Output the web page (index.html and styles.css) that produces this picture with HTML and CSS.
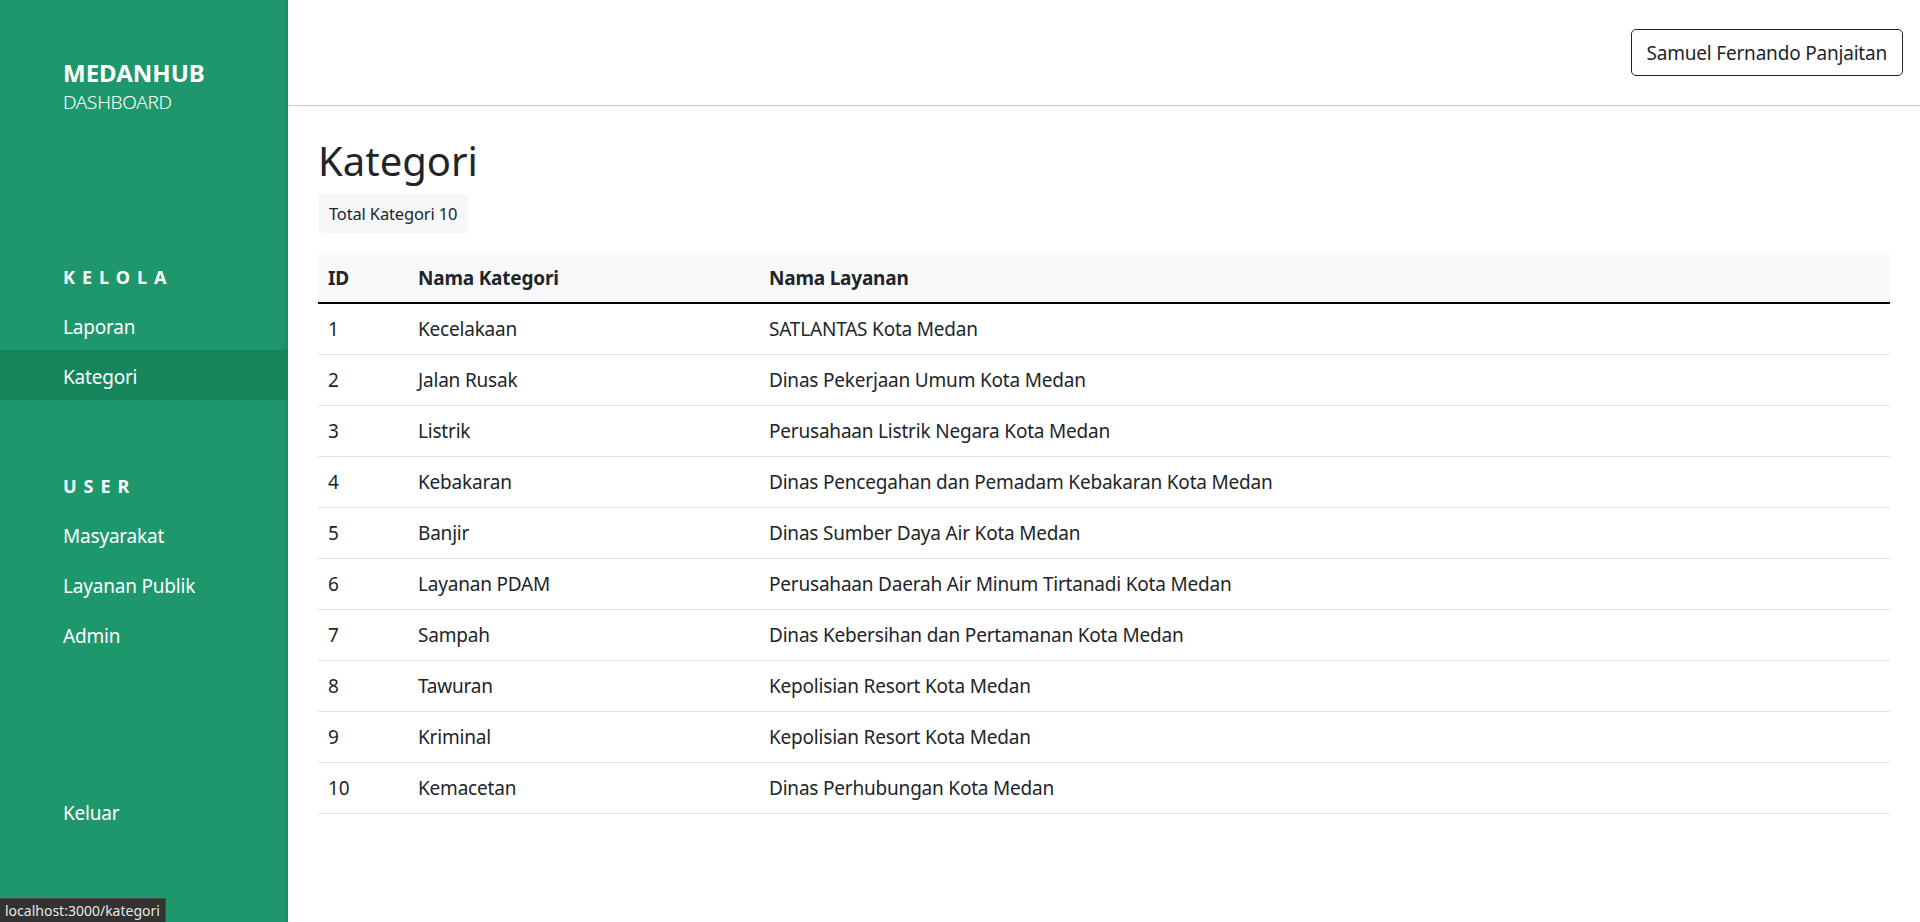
FILE: index.html
```html
<!DOCTYPE html>
<html lang="id">
<head>
<meta charset="utf-8">
<title>Kategori - MedanHub Dashboard</title>
<link rel="stylesheet" href="styles.css">
</head>
<body>
<div class="layout">
  <aside class="sidebar">
    <div class="brand">
      <div class="brand-name">MEDANHUB</div>
      <div class="brand-sub">DASHBOARD</div>
    </div>
    <nav class="nav-section first">
      <div class="nav-heading">KELOLA</div>
      <a class="nav-item" href="#">Laporan</a>
      <a class="nav-item active" href="#">Kategori</a>
    </nav>
    <nav class="nav-section">
      <div class="nav-heading">USER</div>
      <a class="nav-item" href="#">Masyarakat</a>
      <a class="nav-item" href="#">Layanan Publik</a>
      <a class="nav-item" href="#">Admin</a>
    </nav>
    <div class="nav-bottom">
      <a class="nav-item" href="#">Keluar</a>
    </div>
  </aside>
  <main class="main">
    <header class="topbar">
      <button class="user-btn" type="button">Samuel Fernando Panjaitan</button>
    </header>
    <section class="content">
      <h1 class="page-title">Kategori</h1>
      <div class="total-badge">Total Kategori 10</div>
      <table class="data-table">
        <thead>
          <tr><th class="col-id">ID</th><th class="col-name">Nama Kategori</th><th>Nama Layanan</th></tr>
        </thead>
        <tbody>
          <tr><td>1</td><td>Kecelakaan</td><td>SATLANTAS Kota Medan</td></tr>
          <tr><td>2</td><td>Jalan Rusak</td><td>Dinas Pekerjaan Umum Kota Medan</td></tr>
          <tr><td>3</td><td>Listrik</td><td>Perusahaan Listrik Negara Kota Medan</td></tr>
          <tr><td>4</td><td>Kebakaran</td><td>Dinas Pencegahan dan Pemadam Kebakaran Kota Medan</td></tr>
          <tr><td>5</td><td>Banjir</td><td>Dinas Sumber Daya Air Kota Medan</td></tr>
          <tr><td>6</td><td>Layanan PDAM</td><td>Perusahaan Daerah Air Minum Tirtanadi Kota Medan</td></tr>
          <tr><td>7</td><td>Sampah</td><td>Dinas Kebersihan dan Pertamanan Kota Medan</td></tr>
          <tr><td>8</td><td>Tawuran</td><td>Kepolisian Resort Kota Medan</td></tr>
          <tr><td>9</td><td>Kriminal</td><td>Kepolisian Resort Kota Medan</td></tr>
          <tr><td>10</td><td>Kemacetan</td><td>Dinas Perhubungan Kota Medan</td></tr>
        </tbody>
      </table>
    </section>
  </main>
</div>
<div class="status-bubble">localhost:3000/kategori</div>
</body>
</html>
```
FILE: styles.css
```css
* { box-sizing: border-box; }
html, body { margin: 0; padding: 0; height: 100%; }
body {
  font-family: "Noto Sans", "Open Sans", sans-serif;
  color: #212529;
  background: #fff;
  overflow: hidden;
}
.layout {
  display: flex;
  height: 922px;
}
.sidebar {
  width: 288px;
  flex: 0 0 288px;
  background: #1f976c;
  color: #fff;
  display: flex;
  flex-direction: column;
  box-shadow: inset -7px 0 8px -7px rgba(0,0,0,0.18);
}
.brand {
  padding: 56px 0 0 63px;
}
.brand-name {
  font-size: 24px;
  font-weight: 700;
  line-height: 33px;
}
.brand-sub {
  font-size: 19px;
  font-weight: 300;
  line-height: 26px;
  letter-spacing: -0.3px;
}
.nav-section { display: flex; flex-direction: column; }
.nav-section.first { margin-top: 149px; }
.nav-section + .nav-section { margin-top: 73px; }
.nav-heading {
  padding-left: 63px;
  font-size: 18px;
  font-weight: 700;
  line-height: 27px;
  letter-spacing: 7px;
  margin-bottom: 9px;
}
.nav-item {
  display: block;
  padding: 12px 0 8px 63px;
  font-size: 19px;
  letter-spacing: -0.2px;
  line-height: 30px;
  color: #fff;
  text-decoration: none;
}
.nav-item.active { background: #17855b; }
.nav-bottom {
  margin-top: auto;
  padding-bottom: 86px;
}
.main {
  flex: 1;
  display: flex;
  flex-direction: column;
  min-width: 0;
}
.topbar {
  height: 106px;
  border-bottom: 1px solid #c8c8c8;
  display: flex;
  align-items: center;
  justify-content: flex-end;
  padding: 0 17px 0 0;
}
.user-btn {
  font-family: inherit;
  font-size: 19px;
  letter-spacing: -0.2px;
  line-height: 30px;
  padding: 7.5px 15px;
  color: #212529;
  background: #fff;
  border: 1.25px solid #212529;
  border-radius: 5px;
}
.content {
  padding: 0 30px;
}
.page-title {
  margin: 31px 0 0;
  font-size: 40px;
  font-weight: 400;
  line-height: 48px;
}
.total-badge {
  display: inline-block;
  margin-top: 9px;
  padding: 6.5px 11px;
  font-size: 16.5px;
  letter-spacing: -0.15px;
  line-height: 26px;
  background: #f6f7f9;
  border-radius: 4px;
}
.data-table {
  margin-top: 20px;
  width: 100%;
  border-collapse: collapse;
  font-size: 19px;
  letter-spacing: -0.2px;
  line-height: 30px;
}
.data-table th {
  text-align: left;
  font-weight: 700;
  background: #f8f9fa;
  padding: 10px 10px 9px;
  border-bottom: 2px solid #000;
}
.data-table td {
  padding: 10px;
  border-bottom: 1px solid #dee2e6;
}
.col-id { width: 90px; }
.col-name { width: 351px; }
.status-bubble {
  position: fixed;
  left: 0;
  bottom: 0;
  padding: 1px 5px 1px;
  font-size: 14px;
  line-height: 21px;
  color: #e6e6e6;
  background: #323232;
  border: 1px solid #4a4a4a;
  border-left: 0;
  border-bottom: 0;
}
```
